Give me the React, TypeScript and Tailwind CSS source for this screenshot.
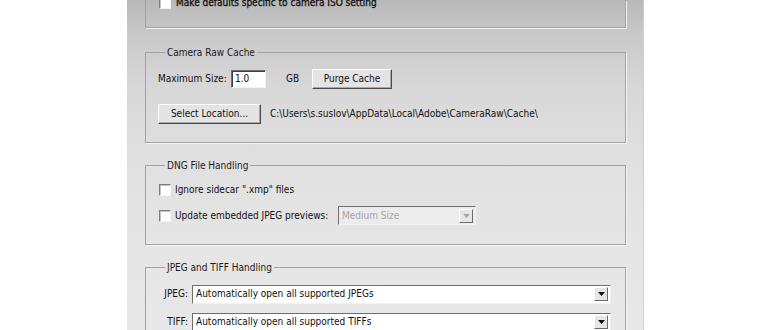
import React from "react";

const font = "font-['DejaVu_Sans_Condensed','Liberation_Sans',sans-serif]";

function Checkbox() {
  return (
    <span className="box-border inline-block h-[12px] w-[12px] shrink-0 border border-t-[#7c7c7c] border-l-[#7c7c7c] border-r-[#f4f4f4] border-b-[#f4f4f4] bg-white shadow-[inset_1px_1px_0_#c4c4c4]" />
  );
}

function Button({ label, width }: { label: string; width: string }) {
  return (
    <div
      className={`box-border flex h-[20px] ${width} items-center justify-center border border-t-white border-l-white border-r-[#4a4a4a] border-b-[#4a4a4a] bg-[#e4e4e4] text-[#111] shadow-[inset_-1px_-1px_0_#a8a8a8]`}
    >
      {label}
    </div>
  );
}

function Arrow({ disabled }: { disabled?: boolean }) {
  return (
    <div className="box-border flex h-[14px] w-[14px] items-center justify-center border border-t-white border-l-white border-r-[#6a6a6a] border-b-[#6a6a6a] bg-[#e6e6e6]">
      <svg width="7" height="4" viewBox="0 0 7 4">
        <path d="M0 0h7L3.5 4z" fill={disabled ? "#a8a8a8" : "#111"} />
      </svg>
    </div>
  );
}

function Select({ value, width, disabled }: { value: string; width: string; disabled?: boolean }) {
  return (
    <div
      className={`box-border flex h-[19px] ${width} items-center justify-between border border-t-[#6e6e6e] border-l-[#6e6e6e] border-r-[#f2f2f2] border-b-[#f2f2f2] pl-[3px] pr-[2px] ${
        disabled ? "bg-[#ececec] text-[#a6a6a6]" : "bg-white text-[#111]"
      }`}
    >
      <span>{value}</span>
      <Arrow disabled={disabled} />
    </div>
  );
}

function Group({ title, children, className }: { title: string; children: React.ReactNode; className: string }) {
  return (
    <fieldset
      className={`box-border w-[481px] border border-[#a2a2a2] pl-[12px] shadow-[1px_1px_0_#f6f6f6] ${className}`}
    >
      <legend className="ml-[7px] px-[2px] leading-[13px] text-[#1a1a1a]">{title}</legend>
      {children}
    </fieldset>
  );
}

export default function App() {
  return (
    <div className={`h-[330px] w-[770px] overflow-hidden bg-white ${font} text-[10px] leading-[12px] text-[#111]`}>
      <div className="box-border flex h-[330px] w-[517px] ml-[127px] flex-col border-r border-[#cfcfcf] bg-[linear-gradient(180deg,#b8b8b8_0px,#c9c9c9_35px,#d8d8d8_90px,#e1e1e1_170px,#e6e6e6_260px,#e8e8e8_330px)] pl-[18px]">
        {/* preferences group cut off at the top */}
        <div className="box-border h-[28px] w-[481px] shrink-0 border-x border-b border-[#a2a2a2] pl-[13px] shadow-[1px_1px_0_#f2f2f2]">
          <div className="-mt-[3px] flex items-center gap-[5px]">
            <Checkbox />
            <span className="font-medium [-webkit-text-stroke:0.3px_#111]">Make defaults specific to camera ISO setting</span>
          </div>
        </div>

        <Group title="Camera Raw Cache" className="mt-[18px] pb-[18px]">
          <div className="mt-[10px] flex h-[20px] items-center">
            <span className="w-[73px]">Maximum Size:</span>
            <div className="box-border flex h-[18px] w-[35px] items-center border border-t-[#6e6e6e] border-l-[#6e6e6e] border-r-[#f2f2f2] border-b-[#f2f2f2] bg-white pl-[3px] shadow-[inset_1px_1px_0_#3e3e3e]">
              1.0
            </div>
            <span className="ml-[20px] w-[26px]">GB</span>
            <Button label="Purge Cache" width="w-[80px]" />
          </div>
          <div className="mt-[15px] flex h-[20px] items-center">
            <Button label="Select Location..." width="w-[103px]" />
            <span className="ml-[9px]">C:\Users\s.suslov\AppData\Local\Adobe\CameraRaw\Cache\</span>
          </div>
        </Group>

        <Group title="DNG File Handling" className="mt-[16px] pb-[19px]">
          <div className="ml-[1px] mt-[12px] flex h-[12px] items-center gap-[4px]">
            <Checkbox />
            <span>Ignore sidecar ".xmp" files</span>
          </div>
          <div className="ml-[1px] mt-[10px] flex h-[19px] items-center">
            <Checkbox />
            <span className="ml-[4px] w-[163px]">Update embedded JPEG previews:</span>
            <Select value="Medium Size" width="w-[138px]" disabled />
          </div>
        </Group>

        <Group title="JPEG and TIFF Handling" className="mt-[16px] pb-[20px]">
          <div className="mt-[11px] flex h-[18px] items-center">
            <span className="w-[30px] text-right">JPEG:</span>
            <div className="ml-[4px]">
              <Select value="Automatically open all supported JPEGs" width="w-[419px]" />
            </div>
          </div>
          <div className="mt-[10px] flex h-[18px] items-center">
            <span className="w-[30px] text-right">TIFF:</span>
            <div className="ml-[4px]">
              <Select value="Automatically open all supported TIFFs" width="w-[419px]" />
            </div>
          </div>
        </Group>
      </div>
    </div>
  );
}
